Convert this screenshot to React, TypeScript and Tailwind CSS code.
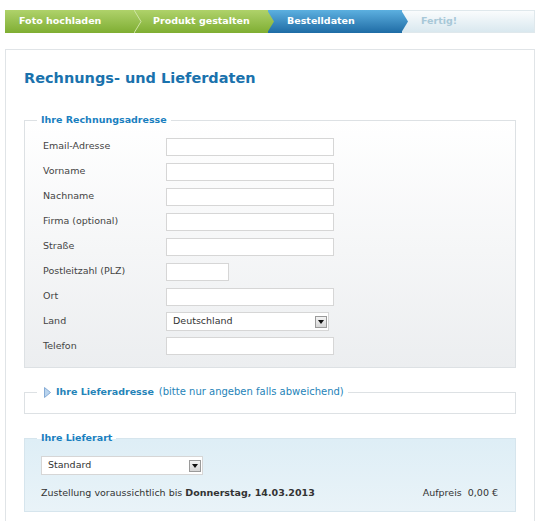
import React from 'react';

const labelCls = 'w-[123px] shrink-0 text-[9.5px] text-[#444]';

function Arrow({ id, from, to, outline }: { id: string; from: string; to: string; outline?: boolean }) {
  return (
    <svg className="absolute -right-[7px] top-0 z-10 h-[23px] w-[8px]" viewBox="0 0 8 23">
      <defs>
        <linearGradient id={id} x1="0" y1="0" x2="0" y2="1">
          <stop offset="0" stopColor={from} />
          <stop offset="1" stopColor={to} />
        </linearGradient>
      </defs>
      {outline ? (
        <path d="M0 0 L7 11.5 L0 23" fill="none" stroke="#cfe4a6" strokeWidth="1" />
      ) : (
        <path d="M0 0 L7 11.5 L0 23 Z" fill={`url(#${id})`} />
      )}
    </svg>
  );
}

function Steps() {
  return (
    <div className="flex h-[23px] w-[530px] text-[9.5px] font-bold">
      <div className="relative flex w-[130px] items-center bg-gradient-to-b from-[#afd26a] to-[#7fae31] pl-[14px] text-white">
        Foto hochladen
        <Arrow id="g1" from="#afd26a" to="#7fae31" outline />
      </div>
      <div className="relative flex w-[133px] items-center bg-gradient-to-b from-[#afd26a] to-[#7fae31] pl-[18px] text-white">
        Produkt gestalten
        <Arrow id="g2" from="#afd26a" to="#7fae31" />
      </div>
      <div className="relative flex w-[134px] items-center bg-gradient-to-b from-[#5cb0e0] to-[#1e6ca5] pl-[19px] text-white">
        Bestelldaten
        <Arrow id="g3" from="#5cb0e0" to="#1e6ca5" />
      </div>
      <div className="flex w-[133px] items-center border border-l-0 border-[#dfe8ec] bg-gradient-to-b from-[#fafcfd] to-[#d9e8ef] pl-[19px] text-[#a8c8d8]">
        Fertig!
      </div>
    </div>
  );
}

function Select({ value, width }: { value: string; width: string }) {
  return (
    <div className={`flex h-[19px] items-center justify-between border border-[#d6d6d6] bg-white pl-[6px] pr-[1px] text-[9.5px] text-[#333] ${width}`}>
      <span>{value}</span>
      <span className="flex h-[12px] w-[12px] items-center justify-center border border-[#9a9a9a] bg-gradient-to-b from-[#f4f4f4] to-[#d6d6d6]">
        <svg width="6" height="4" viewBox="0 0 6 4">
          <path d="M0 0 H6 L3 4 Z" fill="#111" />
        </svg>
      </span>
    </div>
  );
}

function Row({ label, children }: { label: string; children: React.ReactNode }) {
  return (
    <div className="flex h-[25px] items-center">
      <span className={labelCls}>{label}</span>
      {children}
    </div>
  );
}

function Input({ width = 'w-[168px]' }: { width?: string }) {
  return <div className={`h-[18px] border border-[#d6d6d6] bg-white ${width}`} />;
}

export default function App() {
  return (
    <div className="min-h-[521px] bg-white pt-[10px] pl-[5px] font-['DejaVu_Sans',Verdana,sans-serif]">
      <Steps />

      <div className="mt-[16px] w-[530px] border border-[#e0e4e7] px-[18px] pt-[19px] pb-[24px]">
        <h1 className="text-[14.5px] leading-[18px] font-bold text-[#1a72ad]">Rechnungs- und Lieferdaten</h1>

        <fieldset className="mt-[27px] border border-[#dde1e4] bg-gradient-to-b from-white to-[#eceef0] px-[12px] pt-[8px] pb-[9px]">
          <legend className="px-[4px] text-[9.5px] leading-[12px] font-bold text-[#1a7fbf]">Ihre Rechnungsadresse</legend>
          <div className="pl-[6px]">
            <Row label="Email-Adresse"><Input /></Row>
            <Row label="Vorname"><Input /></Row>
            <Row label="Nachname"><Input /></Row>
            <Row label="Firma (optional)"><Input /></Row>
            <Row label="Straße"><Input /></Row>
            <Row label="Postleitzahl (PLZ)"><Input width="w-[63px]" /></Row>
            <Row label="Ort"><Input /></Row>
            <Row label="Land"><Select value="Deutschland" width="w-[163px]" /></Row>
            <div className="flex h-[24px] items-center">
              <span className={labelCls}>Telefon</span>
              <Input />
            </div>
          </div>
        </fieldset>

        <fieldset className="mt-[18px] border border-[#dde1e4] px-[12px] pb-[15px]">
          <legend className="flex items-center pr-[4px] pl-[7px] text-[9.5px] leading-[12px] text-[#2583b8]">
            <svg width="7" height="11" viewBox="0 0 7 11" className="mr-[5px]">
              <path d="M0.5 0.5 L6.5 5.5 L0.5 10.5 Z" fill="#b9d4ee" stroke="#86acd6" strokeWidth="1" />
            </svg>
            <span className="font-bold">Ihre Lieferadresse</span>
            <span className="ml-[5px] text-[10px]">(bitte nur angeben falls abweichend)</span>
          </legend>
        </fieldset>

        <fieldset className="mt-[18px] border border-[#d6e5ed] bg-gradient-to-b from-[#deeef6] to-[#e9f3f8] px-[12px] pb-[12px]">
          <legend className="px-[4px] text-[9.5px] leading-[12px] font-bold text-[#1a7fbf]">Ihre Lieferart</legend>
          <div className="pl-[4px] pr-[5px]">
            <div className="mt-[12px]">
              <Select value="Standard" width="w-[162px]" />
            </div>
            <div className="mt-[12px] flex items-center justify-between text-[9.5px] leading-[12px] text-[#333]">
              <span>
                Zustellung voraussichtlich bis <b>Donnerstag, 14.03.2013</b>
              </span>
              <span>
                Aufpreis&nbsp;&nbsp;0,00 €
              </span>
            </div>
          </div>
        </fieldset>
      </div>
    </div>
  );
}
